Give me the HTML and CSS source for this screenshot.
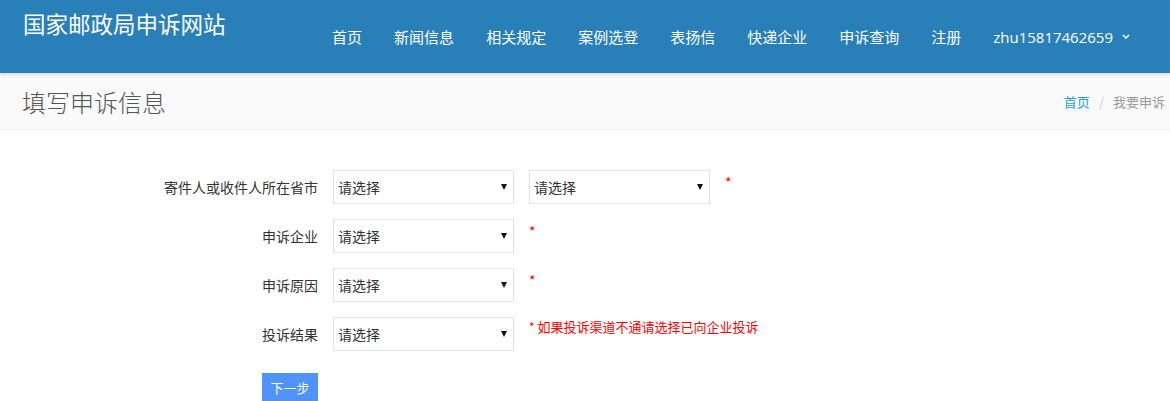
FILE: index.html
```html
<!DOCTYPE html>
<html lang="zh-CN">
<head>
  <meta charset="UTF-8" />
  <title>我要申诉 - 国家邮政局申诉网站</title>
  <link rel="stylesheet" href="styles.css">
</head>
<body>

  <header class="topbar">
    <div class="brand">国家邮政局申诉网站</div>
    <nav class="nav">
      <a href="#">首页</a>
      <a href="#">新闻信息</a>
      <a href="#">相关规定</a>
      <a href="#">案例选登</a>
      <a href="#">表扬信</a>
      <a href="#">快递企业</a>
      <a href="#">申诉查询</a>
      <a href="#">注册</a>
      <a href="#" class="user">zhu15817462659
        <svg class="caret" width="8" height="5" viewBox="0 0 8 5"><path d="M1 1 L4 4 L7 1" fill="none" stroke="#fff" stroke-width="1.5"/></svg>
      </a>
    </nav>
  </header>

  <div class="page-head">
    <h1>填写申诉信息</h1>
    <ol class="crumbs">
      <li><a href="#">首页</a></li>
      <li class="sep">/</li>
      <li>我要申诉</li>
    </ol>
  </div>

  <form class="complaint">
    <div class="row">
      <label>寄件人或收件人所在省市</label>
      <div class="field">
        <div class="select-wrap"><select><option>请选择</option></select></div>
        <div class="select-wrap"><select><option>请选择</option></select></div>
        <span class="req">*</span>
      </div>
    </div>
    <div class="row">
      <label>申诉企业</label>
      <div class="field">
        <div class="select-wrap"><select><option>请选择</option></select></div>
        <span class="req">*</span>
      </div>
    </div>
    <div class="row">
      <label>申诉原因</label>
      <div class="field">
        <div class="select-wrap"><select><option>请选择</option></select></div>
        <span class="req">*</span>
      </div>
    </div>
    <div class="row">
      <label>投诉结果</label>
      <div class="field">
        <div class="select-wrap"><select><option>请选择</option></select></div>
        <span class="hint"><span class="star">*</span> 如果投诉渠道不通请选择已向企业投诉</span>
      </div>
    </div>
    <div class="row actions">
      <div class="action-cell"><button type="button">下一步</button></div>
    </div>
  </form>

</body>
</html>
```

FILE: styles.css
```css
body {
  margin: 0;
  font-family: "Noto Sans CJK SC", "Open Sans", sans-serif;
  color: #333;
  background: #fff;
}

.topbar {
  display: flex;
  height: 73px;
  background: #2980b9;
  color: #fff;
  box-shadow: 0 2px 4px rgba(0, 0, 0, 0.12);
  position: relative;
}

.brand {
  padding: 8px 0 0 23px;
  font-size: 22.5px;
  line-height: 30px;
}

.nav {
  display: flex;
  margin-left: auto;
  padding-right: 24px;
}

.nav a {
  display: flex;
  align-items: center;
  padding: 0 16px;
  font-size: 15px;
  color: #fff;
  text-decoration: none;
}

.nav .user {
  font-family: "Open Sans", "Noto Sans CJK SC", sans-serif;
}

.caret {
  margin-left: 9px;
}

.page-head {
  display: flex;
  align-items: center;
  height: 56px;
  background: #fafafa;
  border-bottom: 1px solid #eee;
}

.page-head h1 {
  margin: 0;
  padding-left: 22px;
  font-size: 24px;
  font-weight: 300;
  color: #555;
}

.crumbs {
  display: flex;
  margin: 0 0 0 auto;
  padding: 0 5px 0 0;
  list-style: none;
  font-size: 13px;
  color: #999;
}

.crumbs a {
  color: #2a9fd6;
  text-decoration: none;
}

.crumbs .sep {
  padding: 0 9px;
  color: #ccc;
}

.complaint {
  padding-top: 40px;
}

.row {
  display: flex;
  align-items: flex-start;
  margin-bottom: 15px;
}

.row label {
  width: 318px;
  text-align: right;
  font-size: 14px;
  line-height: 34px;
}

.action-cell {
  display: flex;
  justify-content: flex-end;
  width: 318px;
}

.field {
  display: flex;
  align-items: flex-start;
  gap: 15px;
  margin-left: 15px;
}

.select-wrap {
  position: relative;
}

.select-wrap::after {
  content: "";
  position: absolute;
  right: 7px;
  top: 14px;
  border-left: 3px solid transparent;
  border-right: 3px solid transparent;
  border-top: 6px solid #111;
  pointer-events: none;
}

select {
  appearance: none;
  -webkit-appearance: none;
  width: 181px;
  height: 34px;
  padding: 0 0 0 4px;
  border: 1px solid #e3e3e3;
  border-radius: 0;
  background: #fff;
  font-family: "Noto Sans CJK SC", sans-serif;
  font-size: 14px;
  color: #333;
}

.req {
  color: #f00;
  font-size: 14px;
  line-height: 20px;
  padding-top: 2px;
}

.hint {
  color: #f00;
  font-size: 13px;
  line-height: 20px;
}

.star {
  font-size: 12px;
}

.actions {
  margin-top: 22px;
}

button {
  display: block;
  width: 56px;
  height: 28px;
  border: none;
  background: #4f93fc;
  color: #fff;
  font-family: "Noto Sans CJK SC", sans-serif;
  font-size: 13px;
  cursor: pointer;
}
```
